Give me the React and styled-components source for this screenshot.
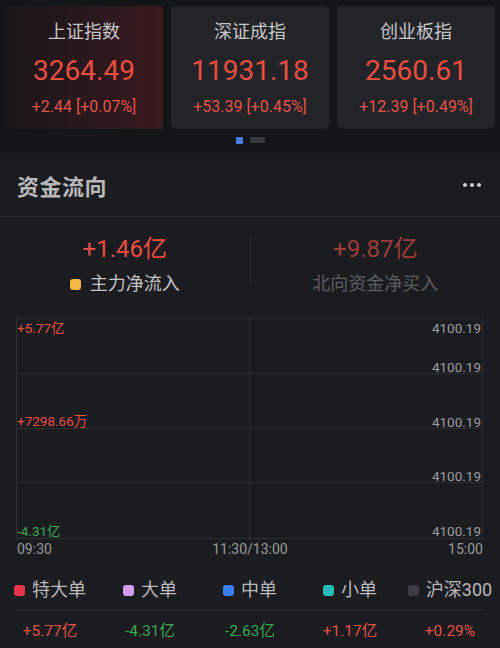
import React from 'react'
import styled, { createGlobalStyle } from 'styled-components'

const GlobalStyle = createGlobalStyle`
  html, body {
    margin: 0;
    padding: 0;
    background: #141517;
    font-family: Roboto, "Noto Sans CJK SC", sans-serif;
  }
  * { box-sizing: border-box; }
`

const RED = '#ec4d43'
const GREEN = '#38a853'

const indices = [
  { name: '上证指数', value: '3264.49', change: '+2.44 [+0.07%]', active: true },
  { name: '深证成指', value: '11931.18', change: '+53.39 [+0.45%]' },
  { name: '创业板指', value: '2560.61', change: '+12.39 [+0.49%]' },
]

const legend = [
  { name: '特大单', color: '#e8344e', value: '+5.77亿', up: true },
  { name: '大单', color: '#d29cf3', value: '-4.31亿' },
  { name: '中单', color: '#3b7ff2', value: '-2.63亿' },
  { name: '小单', color: '#26bcbc', value: '+1.17亿', up: true },
  { name: '沪深300', color: '#3a3b43', value: '+0.29%', up: true },
]

const leftLabels = [
  { text: '+5.77亿', top: 2, color: RED },
  { text: '+7298.66万', top: 95, color: RED },
  { text: '-4.31亿', top: 205, color: GREEN },
]
const rightLabels = [2, 41, 96, 150, 205]

const Page = styled.div`
  width: 500px;
  min-height: 648px;
  background: #141517;
  overflow: hidden;
`

const Cards = styled.div`
  display: grid;
  grid-template-columns: repeat(3, 158px);
  gap: 8px;
  padding: 6px 5px 0;
`

const Card = styled.div`
  height: 123px;
  border-radius: 4px;
  display: flex;
  flex-direction: column;
  align-items: center;
  background: ${p => p.$active
    ? 'linear-gradient(90deg, rgba(58,24,29,0.1) 0%, #391a1f 100%)'
    : '#232428'};
`

const CardTitle = styled.div`
  margin-top: 14px;
  font-size: 18px;
  line-height: 24px;
  color: #c6c6c8;
`

const CardValue = styled.div`
  margin-top: 10px;
  font-size: 28px;
  line-height: 34px;
  color: ${RED};
`

const CardChange = styled.div`
  margin-top: 9px;
  font-size: 16px;
  line-height: 20px;
  color: #e4534a;
`

const Pager = styled.div`
  display: flex;
  justify-content: center;
  gap: 7px;
  margin: 8px 0 9px;
  height: 7px;
`

const Dot = styled.span`
  width: ${p => (p.$on ? 7 : 15)}px;
  height: ${p => (p.$on ? 7 : 6)}px;
  background: ${p => (p.$on ? '#4a80e2' : '#393a40')};
  border-radius: 1px;
`

const Section = styled.section`
  background: #1b1c1f;
  padding-bottom: 20px;
`

const Header = styled.div`
  height: 64px;
  padding: 0 19px 0 17px;
  display: flex;
  align-items: center;
  justify-content: space-between;
  border-bottom: 1px solid #2a2b2f;
`

const Heading = styled.h2`
  margin: 0;
  font-size: 22px;
  font-weight: 700;
  color: #b9b9bc;
  letter-spacing: 0.5px;
`

const More = styled.div`
  display: flex;
  gap: 3px;
  span {
    width: 4px;
    height: 4px;
    border-radius: 50%;
    background: #cfcfd2;
  }
`

const Summary = styled.div`
  display: grid;
  grid-template-columns: 1fr 1px 1fr;
  padding-top: 17px;
  height: 101px;
`

const SummaryItem = styled.div`
  display: flex;
  flex-direction: column;
  align-items: center;
`

const SummaryValue = styled.div`
  font-size: 24px;
  line-height: 30px;
  color: ${p => (p.$dim ? '#9c3d37' : RED)};
`

const SummaryLabel = styled.div`
  margin-top: 8px;
  font-size: 18px;
  line-height: 24px;
  display: flex;
  align-items: center;
  gap: 9px;
  color: ${p => (p.$dim ? '#5d5e62' : '#c4c4c6')};
`

const Swatch = styled.span`
  width: 11px;
  height: 11px;
  border-radius: 3px;
  background: ${p => p.$color};
  flex-shrink: 0;
`

const VDivider = styled.div`
  width: 1px;
  height: 52px;
  background: #2a2b2f;
`

const Chart = styled.div`
  position: relative;
  margin: 0 17px 0 16px;
  height: 221px;
  border: 1px solid #2d2e32;
  display: grid;
  grid-template-columns: 1fr 1fr;
  grid-template-rows: repeat(4, 1fr);
`

const Cell = styled.div`
  border-right: ${p => (p.$left ? '1px solid #2d2e32' : 'none')};
  border-bottom: ${p => (p.$last ? 'none' : '1px solid #2d2e32')};
`

const Label = styled.span`
  position: absolute;
  font-size: 13.5px;
  line-height: 14px;
  color: ${p => p.$color};
  ${p => (p.$right ? 'right: 1px;' : 'left: 0;')}
`

const Axis = styled.div`
  display: flex;
  justify-content: space-between;
  margin: 2px 17px 0 17px;
  font-size: 14px;
  line-height: 16px;
  color: #9a9a9e;
`

const LegendRow = styled.div`
  display: grid;
  grid-template-columns: repeat(5, 100px);
  margin-top: 21px;
`

const LegendItem = styled.div`
  display: flex;
  align-items: center;
  justify-content: center;
  gap: 7px;
  font-size: 18px;
  line-height: 24px;
  color: #b9b9bc;
`

const HDivider = styled.div`
  height: 1px;
  margin: 8px 17px 10px 16px;
  background: #2a2b2f;
`

const ValueItem = styled.div`
  text-align: center;
  font-size: 15.5px;
  line-height: 20px;
  color: ${p => (p.$up ? '#e4534a' : GREEN)};
`

export default function App() {
  return (
    <Page>
      <GlobalStyle />
      <Cards>
        {indices.map(item => (
          <Card key={item.name} $active={item.active}>
            <CardTitle>{item.name}</CardTitle>
            <CardValue>{item.value}</CardValue>
            <CardChange>{item.change}</CardChange>
          </Card>
        ))}
      </Cards>
      <Pager>
        <Dot $on />
        <Dot />
      </Pager>

      <Section>
        <Header>
          <Heading>资金流向</Heading>
          <More><span /><span /><span /></More>
        </Header>

        <Summary>
          <SummaryItem>
            <SummaryValue>+1.46亿</SummaryValue>
            <SummaryLabel>
              <Swatch $color="#f4b944" />
              主力净流入
            </SummaryLabel>
          </SummaryItem>
          <VDivider />
          <SummaryItem>
            <SummaryValue $dim>+9.87亿</SummaryValue>
            <SummaryLabel $dim>北向资金净买入</SummaryLabel>
          </SummaryItem>
        </Summary>

        <Chart>
          {Array.from({ length: 8 }).map((_, i) => (
            <Cell key={i} $left={i % 2 === 0} $last={i >= 6} />
          ))}
          {leftLabels.map(l => (
            <Label key={l.text} $color={l.color} style={{ top: l.top }}>{l.text}</Label>
          ))}
          {rightLabels.map(top => (
            <Label key={top} $right $color="#9c9ca0" style={{ top }}>4100.19</Label>
          ))}
        </Chart>
        <Axis>
          <span>09:30</span>
          <span>11:30/13:00</span>
          <span>15:00</span>
        </Axis>

        <LegendRow>
          {legend.map(l => (
            <LegendItem key={l.name}>
              <Swatch $color={l.color} />
              {l.name}
            </LegendItem>
          ))}
        </LegendRow>
        <HDivider />
        <LegendRow style={{ marginTop: 0 }}>
          {legend.map(l => (
            <ValueItem key={l.name} $up={l.up}>{l.value}</ValueItem>
          ))}
        </LegendRow>
      </Section>
    </Page>
  )
}
